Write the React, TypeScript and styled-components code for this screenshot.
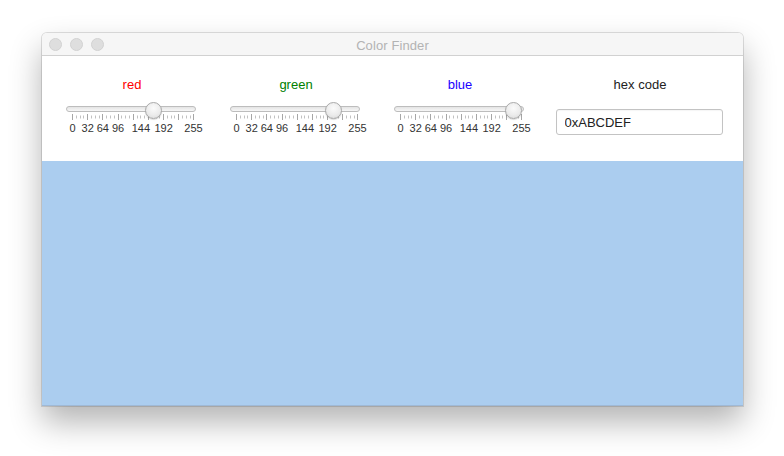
import React from "react";
import styled, { createGlobalStyle } from "styled-components";

const Global = createGlobalStyle`
  html, body { margin: 0; padding: 0; background: #ffffff; }
  body { font-family: "Liberation Sans", Arial, sans-serif; }
`;

const Page = styled.div`
  padding: 33px 0 0 42px;
  width: 784px;
  height: 456px;
  box-sizing: border-box;
  overflow: hidden;
`;

const Window = styled.div`
  width: 701px;
  height: 373px;
  display: flex;
  flex-direction: column;
  border-radius: 5px 5px 0 0;
  overflow: hidden;
  box-shadow: 0 0 0 1px rgba(0, 0, 0, 0.12), 0 16px 32px rgba(0, 0, 0, 0.3);
`;

const TitleBar = styled.div`
  height: 22px;
  flex: none;
  position: relative;
  display: flex;
  align-items: center;
  justify-content: center;
  background: #f6f6f6;
  border-bottom: 1px solid #d1d1d1;
`;

const Lights = styled.div`
  position: absolute;
  left: 7px;
  top: 5px;
  display: flex;
  gap: 8px;
`;

const Light = styled.span`
  width: 11px;
  height: 11px;
  border-radius: 50%;
  background: #dedede;
  border: 0.5px solid #d2d2d2;
`;

const Title = styled.div`
  font-size: 13px;
  color: #b3b3b3;
  letter-spacing: 0.1px;
  margin-top: 2px;
`;

const Controls = styled.div`
  height: 105px;
  flex: none;
  background: #ffffff;
  display: grid;
  grid-template-columns: 164px 164px 164px 196px;
  padding: 20px 0 0 7px;
  box-sizing: border-box;
`;

const Column = styled.div`
  display: flex;
  flex-direction: column;
  align-items: center;
`;

const Label = styled.div<{ $color: string }>`
  font-size: 13px;
  line-height: 16px;
  color: ${(p) => p.$color};
  height: 16px;
  margin-top: 1px;
  margin-left: 2px;
`;

const SliderBox = styled.div`
  position: relative;
  width: 130px;
  margin-top: 13px;
`;

const Track = styled.div`
  height: 6px;
  box-sizing: border-box;
  border: 1px solid #bdbdbd;
  border-radius: 4px;
  background: linear-gradient(#e4e4e4, #f7f7f7);
`;

const Thumb = styled.div`
  position: absolute;
  top: -4px;
  width: 17px;
  height: 17px;
  box-sizing: border-box;
  border-radius: 50%;
  border: 1px solid #a9a9a9;
  background: radial-gradient(circle at 50% 35%, #fbfbfb 0%, #ececec 55%, #d9d9d9 100%);
  box-shadow: 0 1px 1px rgba(0, 0, 0, 0.15);
`;

const Ticks = styled.svg`
  display: block;
  margin-top: 2px;
`;

const TickLabels = styled.div`
  position: relative;
  height: 13px;
  margin-top: 2px;
`;

const TickLabel = styled.span`
  position: absolute;
  top: 0;
  font-size: 11px;
  line-height: 13px;
  color: #333333;
  transform: translateX(-50%);
  white-space: nowrap;
`;

const HexInput = styled.input`
  margin-top: 16px;
  width: 167px;
  height: 26px;
  box-sizing: border-box;
  border: 1px solid #c3c3c3;
  border-radius: 3px;
  padding: 0 8px;
  font-family: "Liberation Sans", Arial, sans-serif;
  font-size: 13px;
  color: #222;
  outline: none;
  background: #fff;
  box-shadow: inset 0 1px 1px rgba(0, 0, 0, 0.04);
`;

const Swatch = styled.div<{ $color: string }>`
  flex: 1;
  background: ${(p) => p.$color};
  border-bottom: 1px solid #9fb9d6;
`;

const INSET = 6;
const RANGE = 121;
const pos = (v: number) => INSET + (v / 255) * RANGE;
const LABELS = [0, 32, 64, 96, 144, 192, 255];

function Slider({ value }: { value: number }) {
  const ticks: number[] = [];
  for (let v = 0; v <= 256; v += 8) ticks.push(Math.min(v, 255));
  return (
    <SliderBox>
      <Track />
      <Ticks width={130} height={6}>
        {ticks.map((v, i) => {
          const x = Math.round(pos(v)) + 0.5;
          const major = i % 4 === 0;
          return (
            <line
              key={i}
              x1={x}
              x2={x}
              y1={major ? 0 : 1.5}
              y2={major ? 6 : 4.5}
              stroke={major ? "#a6a6a6" : "#c2c2c2"}
              strokeWidth={1}
            />
          );
        })}
      </Ticks>
      <TickLabels>
        {LABELS.map((v) => (
          <TickLabel key={v} style={{ left: pos(v) + 0.5 }}>
            {v}
          </TickLabel>
        ))}
      </TickLabels>
      <Thumb style={{ left: pos(value) - 8 }} />
    </SliderBox>
  );
}

export default function App() {
  const r = 0xab;
  const g = 0xcd;
  const b = 0xef;
  return (
    <>
      <Global />
      <Page>
        <Window>
          <TitleBar>
            <Lights>
              <Light />
              <Light />
              <Light />
            </Lights>
            <Title>Color Finder</Title>
          </TitleBar>
          <Controls>
            <Column>
              <Label $color="#ff0000">red</Label>
              <Slider value={r} />
            </Column>
            <Column>
              <Label $color="#008000">green</Label>
              <Slider value={g} />
            </Column>
            <Column>
              <Label $color="#2000ff">blue</Label>
              <Slider value={b} />
            </Column>
            <Column>
              <Label $color="#222222">hex code</Label>
              <HexInput defaultValue="0xABCDEF" />
            </Column>
          </Controls>
          <Swatch $color="#abcdef" />
        </Window>
      </Page>
    </>
  );
}
